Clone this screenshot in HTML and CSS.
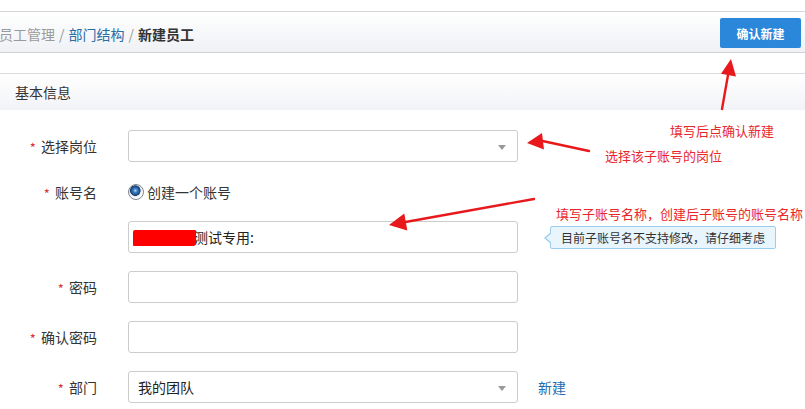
FILE: index.html
```html
<!DOCTYPE html>
<html lang="zh-CN">
<head>
<meta charset="utf-8">
<title>新建员工</title>
<link rel="stylesheet" href="styles.css">
</head>
<body>
<div class="page">
  <div class="topbar">
    <div class="crumbs">
      <span class="crumb-muted">员工管理</span>
      <span class="sep">/</span>
      <span class="crumb-link">部门结构</span>
      <span class="sep">/</span>
      <span class="crumb-current">新建员工</span>
    </div>
    <button class="btn-primary">确认新建</button>
  </div>

  <div class="section-head">基本信息</div>

  <div class="form">
    <div class="row">
      <div class="label"><span class="req">*</span> 选择岗位</div>
      <div class="select"><span class="caret"></span></div>
    </div>
    <div class="row row-radio">
      <div class="label"><span class="req">*</span> 账号名</div>
      <label class="radio"><span class="radio-dot"></span>创建一个账号</label>
    </div>
    <div class="row">
      <div class="label"></div>
      <div class="input masked"><span class="val">某某某某测试专用:</span><span class="blob"></span></div>
      <div class="tip">目前子账号名不支持修改，请仔细考虑</div>
    </div>
    <div class="row">
      <div class="label"><span class="req">*</span> 密码</div>
      <div class="input"></div>
    </div>
    <div class="row">
      <div class="label"><span class="req">*</span> 确认密码</div>
      <div class="input"></div>
    </div>
    <div class="row">
      <div class="label"><span class="req">*</span> 部门</div>
      <div class="select"><span class="val">我的团队</span><span class="caret"></span></div>
      <a class="link">新建</a>
    </div>
  </div>

  <svg class="arrows" width="805" height="409" viewBox="0 0 805 409">
    <g stroke="#e8191c" stroke-width="2.4" stroke-linecap="round" fill="none">
      <line x1="722" y1="109" x2="728.2" y2="74"/>
      <line x1="589" y1="151" x2="542.5" y2="141"/>
      <line x1="534" y1="199" x2="405.5" y2="222"/>
    </g>
    <g fill="#e8191c">
      <polygon points="731,59 736,76.5 721,73.8"/>
      <polygon points="527,143 544,149.5 542,133"/>
      <polygon points="389,225 407.3,230.5 404.3,213.5"/>
    </g>
  </svg>
  <div class="note note-1">填写后点确认新建</div>
  <div class="note note-2">选择该子账号的岗位</div>
  <div class="note note-3">填写子账号名称，创建后子账号的账号名称</div>
</div>
</body>
</html>
```

FILE: styles.css
```css
html, body {
  margin: 0;
  padding: 0;
  overflow: hidden;
  background: #fff;
}
body {
  font-family: "Noto Sans CJK SC", "Noto Sans", sans-serif;
  font-size: 14px;
  color: #333;
}
.page {
  position: relative;
  width: 805px;
  height: 409px;
  padding-top: 11px;
  box-sizing: border-box;
}
.topbar {
  display: flex;
  align-items: center;
  justify-content: space-between;
  border-top: 1px solid #d4d6da;
  border-bottom: 1px solid #cfd1d5;
  padding: 6px 4px 4px 0;
  height: 30px;
  background: linear-gradient(#ffffff, #eff1f5);
}
.crumbs {
  display: flex;
  align-items: center;
  margin-left: -1px;
  font-size: 14px;
  line-height: 20px;
  margin-top: 1px;
}
.crumb-muted { color: #9a9a9a; }
.crumb-link { color: #2b6ca3; }
.crumb-current { color: #333; font-weight: bold; }
.sep { color: #999; margin: 0 4px; }
.btn-primary {
  width: 81px;
  height: 30px;
  border: none;
  border-radius: 2px;
  background: #2a87da;
  color: #fff;
  font-family: inherit;
  font-size: 12px;
  font-weight: bold;
  padding: 0;
}
.section-head {
  margin-top: 20px;
  border-top: 1px solid #d9dbdf;
  height: 36px;
  line-height: 36px;
  padding-left: 15px;
  background: linear-gradient(#ffffff, #f2f3f7);
  font-size: 14px;
  color: #333;
}
.form {
  padding-top: 20px;
  display: flex;
  flex-direction: column;
  gap: 18px;
}
.row {
  display: flex;
  align-items: center;
  height: 32px;
}
.row-radio { height: 23px; }
.label {
  width: 97px;
  margin-right: 31px;
  text-align: right;
  font-size: 14px;
  color: #333;
  flex: none;
}
.req {
  color: #d9363a;
  font-size: 13px;
  margin-right: 2px;
  position: relative;
  top: 1px;
}
.select, .input {
  position: relative;
  width: 390px;
  height: 32px;
  box-sizing: border-box;
  border: 1px solid #cccccc;
  border-radius: 3px;
  background: #fff;
  display: flex;
  align-items: center;
  padding-left: 9px;
  flex: none;
}
.val { font-size: 14px; color: #222; }
.caret {
  position: absolute;
  right: 11px;
  top: 14px;
  width: 0;
  height: 0;
  border-left: 4.5px solid transparent;
  border-right: 4.5px solid transparent;
  border-top: 5px solid #9a9a9a;
}
.masked .blob {
  position: absolute;
  left: 4px;
  top: 8px;
  width: 63px;
  height: 16px;
  background: #ff0000;
  border-radius: 2px 1px 3px 1px;
}
.radio {
  display: flex;
  align-items: center;
  font-size: 14px;
  color: #333;
}
.radio-dot {
  width: 16px;
  height: 16px;
  box-sizing: border-box;
  border-radius: 50%;
  border: 1px solid #7f8489;
  background: radial-gradient(circle at 45% 40%, #b5dcf8 0, #3b7fc4 2px, #163f72 5px, #dfe3e7 5.5px, #ffffff 7.5px);
  margin-right: 3px;
}
.tip {
  position: relative;
  margin-left: 32px;
  height: 23px;
  box-sizing: border-box;
  padding: 0 10px;
  line-height: 21px;
  font-size: 12px;
  color: #333;
  background: #e9f5fd;
  border: 1px solid #9ccdee;
  border-radius: 2px;
  white-space: nowrap;
}
.tip::before {
  content: "";
  position: absolute;
  left: -7px;
  top: 5px;
  border-top: 6px solid transparent;
  border-bottom: 6px solid transparent;
  border-right: 7px solid #9ccdee;
}
.tip::after {
  content: "";
  position: absolute;
  left: -5px;
  top: 6px;
  border-top: 5px solid transparent;
  border-bottom: 5px solid transparent;
  border-right: 6px solid #e9f5fd;
}
.link {
  margin-left: 20px;
  color: #1f6cb0;
  font-size: 14px;
}
.arrows {
  position: absolute;
  left: 0;
  top: 0;
  pointer-events: none;
}
.note {
  position: absolute;
  color: #e8272b;
  font-size: 13px;
  line-height: 16px;
  white-space: nowrap;
}
.note-1 { left: 670px; top: 123px; }
.note-2 { left: 605px; top: 148px; }
.note-3 { left: 556px; top: 206px; }
```
